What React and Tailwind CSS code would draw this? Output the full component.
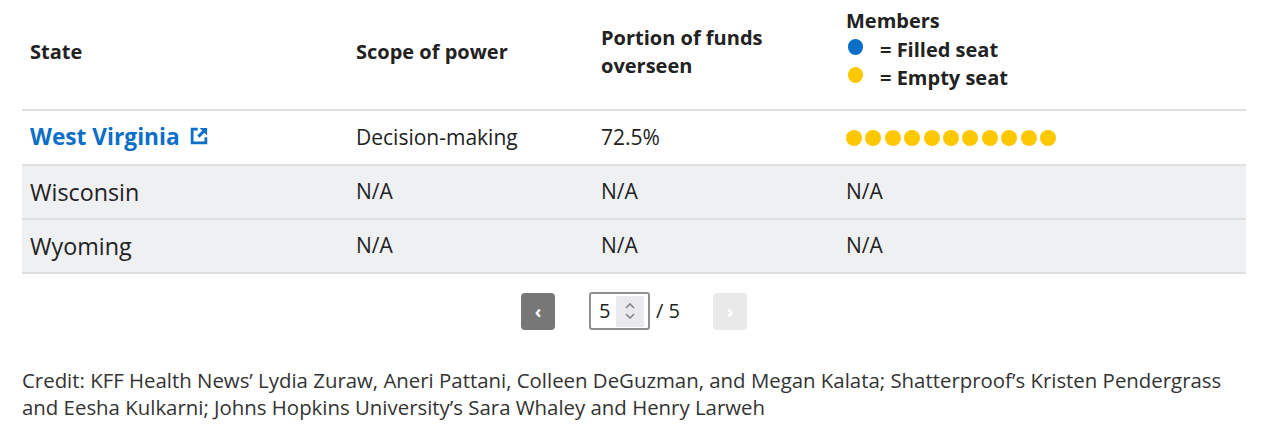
import React from 'react';

const rows = [
  { state: 'Wisconsin', scope: 'N/A', funds: 'N/A', members: 'N/A' },
  { state: 'Wyoming', scope: 'N/A', funds: 'N/A', members: 'N/A' },
];

function ExternalIcon() {
  return (
    <svg width="20" height="20" viewBox="0 0 16 16" className="inline-block ml-[9px] -mt-[6px]" fill="none">
      <path d="M7 2.5H2.5v11h11V9" stroke="#0b6fc8" strokeWidth="2.2" />
      <path d="M8.5 1.5h6v6z" fill="#0b6fc8" />
      <path d="M13 3L7.5 8.5" stroke="#0b6fc8" strokeWidth="2.4" />
    </svg>
  );
}

function Dot({ color }) {
  return <span className={`inline-block w-4 h-4 rounded-full ${color}`} />;
}

export default function App() {
  return (
    <div className="w-[1280px] h-[442px] bg-white text-[#222] font-['Open_Sans',sans-serif] px-[22px]">
      <table className="w-[1224px] border-collapse table-fixed">
        <colgroup>
          <col className="w-[326px]" />
          <col className="w-[245px]" />
          <col className="w-[245px]" />
          <col />
        </colgroup>
        <thead>
          <tr className="border-b-2 border-[#dfdfdf] text-[20px] font-bold leading-[28.5px] text-[#222]">
            <th className="text-left align-middle px-2 h-[110px] pb-[5px]">State</th>
            <th className="text-left align-middle px-2 pb-[5px]">Scope of power</th>
            <th className="text-left align-middle px-2 pb-[5px]">
              Portion of funds
              <br />
              overseen
            </th>
            <th className="text-left align-top px-2 pt-[7px]">
              <div>Members</div>
              <div className="flex items-center">
                <span className="inline-block w-[15px] h-[16px] rounded-full bg-[#0b6fc8] ml-[2px] mr-[17px] -mt-[6px]" />
                = Filled seat
              </div>
              <div className="flex items-center">
                <span className="inline-block w-[15px] h-[16px] rounded-full bg-[#fdc800] ml-[2px] mr-[17px] -mt-[6px]" />
                = Empty seat
              </div>
            </th>
          </tr>
        </thead>
        <tbody className="text-[21px]">
          <tr className="border-b-2 border-[#dfdfdf] h-[55px]">
            <td className="px-2">
              <a className="text-[22.7px] font-bold text-[#0b6fc8]">
                West Virginia
                <ExternalIcon />
              </a>
            </td>
            <td className="px-2">Decision-making</td>
            <td className="px-2">72.5%</td>
            <td className="px-2">
              <div className="flex gap-[3.4px]">
                {Array.from({ length: 11 }).map((_, i) => (
                  <Dot key={i} color="bg-[#fdc800]" />
                ))}
              </div>
            </td>
          </tr>
          {rows.map((r) => (
            <tr key={r.state} className="border-b-2 border-[#dfdfdf] bg-[#eff0f2] h-[54px]">
              <td className="px-2 text-[23.3px]">{r.state}</td>
              <td className="px-2">{r.scope}</td>
              <td className="px-2">{r.funds}</td>
              <td className="px-2">{r.members}</td>
            </tr>
          ))}
        </tbody>
      </table>

      <div className="flex items-center justify-center mt-[18px] pr-[12px] text-[20px]">
        <button className="w-[34px] h-[37px] rounded bg-[#777] text-white font-bold text-[18px] flex items-center justify-center">
          ‹
        </button>
        <div className="ml-[34px] w-[61px] h-[38px] border-2 border-[#8f8f8f] rounded-[3px] flex items-center pl-[8px]">
          <span>5</span>
          <span className="ml-[6px] w-[28px] h-[31px] bg-[#e9e9ee] flex items-center justify-center">
            <svg width="14" height="24" viewBox="0 0 14 24" fill="none" stroke="#888" strokeWidth="1.6">
              <path d="M3 9l4-4 4 4" />
              <path d="M3 15l4 4 4-4" />
            </svg>
          </span>
        </div>
        <span className="ml-[6px]">/ 5</span>
        <button className="ml-[33px] w-[34px] h-[37px] rounded bg-[#e9e9e9] text-white font-bold text-[18px] flex items-center justify-center">
          ›
        </button>
      </div>

      <p className="mt-[37px] text-[20.4px] leading-[27px] text-[#333] pr-[20px]">
        Credit: KFF Health News’ Lydia Zuraw, Aneri Pattani, Colleen DeGuzman, and Megan Kalata; Shatterproof’s Kristen Pendergrass and Eesha Kulkarni; Johns Hopkins University’s Sara Whaley and Henry Larweh
      </p>
    </div>
  );
}
